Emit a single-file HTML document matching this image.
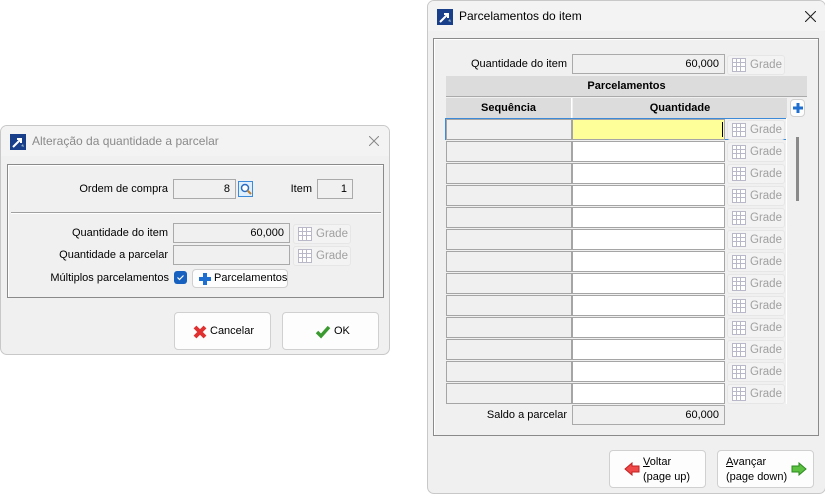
<!DOCTYPE html>
<html><head><meta charset="utf-8"><style>
*{box-sizing:border-box;margin:0;padding:0}
body{width:825px;height:494px;background:#fff;position:relative;overflow:hidden;font-family:"Liberation Sans",sans-serif;font-size:11px;color:#000}
.a{position:absolute}
.dlg{position:absolute;background:#f0f0f0;border:1px solid #c8c8c8;border-radius:7px;overflow:hidden}
.tb{position:absolute;left:0;right:0;top:0;height:30px;background:#f3f3f3}
.tt{position:absolute;left:31px;top:8px;font-size:12px}
.x{position:absolute;top:10px}
.grp{position:absolute;border:1px solid #8a8a8a;box-shadow:inset 1px 1px 0 #fff}
.inp{position:absolute;background:#f0f0f0;border:1px solid #aaa;text-align:right;padding-right:5px;line-height:18px}
.lbl{position:absolute;text-align:right;line-height:18px}
.gb{position:absolute;width:58px;height:20px;border:1px solid #e6e6e6;border-radius:3px;background:#f3f3f3;color:#a0a0a0;line-height:18px;padding-left:22px;font-size:11.5px}
.gb svg{position:absolute;left:4px;top:2px}
.btn{position:absolute;background:#fdfdfd;border:1px solid #d0d0d0;border-radius:4px}
.seq{position:absolute;left:446px;width:126px;height:21px;background:#f0f0f0;border:1px solid #a5a5a5}
.qt{position:absolute;left:572px;width:153px;height:21px;background:#fff;border:1px solid #a5a5a5}
</style></head><body>
<svg width="0" height="0" style="position:absolute"><defs>
<g id="grid"><rect x="0.5" y="0.5" width="13" height="13" fill="#fff" stroke="#b8b8c8"/><path d="M0.5 4.5H13.5M0.5 8.5H13.5M4.5 0.5V13.5M8.5 0.5V13.5" stroke="#b8b8c8"/></g>
<g id="logo"><rect width="16" height="16" fill="#1a3f8a"/><path d="M3 13L11 5M7 5H11V9" stroke="#fff" stroke-width="2" fill="none"/><path d="M11 12l2-2 1 3z" fill="#8ab"/></g>
</defs></svg>

<div class="dlg" style="left:0;top:125px;width:390px;height:230px">
<div class="tb"></div>
<svg class="a" style="left:9px;top:8px" width="16" height="16"><use href="#logo"/></svg>
<div class="tt" style="color:#8a8a8a">Alteração da quantidade a parcelar</div>
<svg class="x" style="left:368px" width="10" height="10"><path d="M0 0L10 10M10 0L0 10" stroke="#888" stroke-width="1"/></svg>
<div class="grp" style="left:6px;top:38px;width:377px;height:134px"></div>
<div class="lbl" style="left:40px;top:54px;width:127px">Ordem de compra</div>
<div class="inp" style="left:172px;top:53px;width:63px;height:20px">8</div>
<div class="a" style="left:237px;top:55px;width:15px;height:16px;border:1px solid #3c8ad8;background:#dfefff"><svg width="13" height="14"><circle cx="6" cy="6" r="3.5" fill="#fff" stroke="#2a6cc0" stroke-width="1.5"/><path d="M8.5 8.5L12 12" stroke="#c08030" stroke-width="2"/></svg></div>
<div class="lbl" style="left:285px;top:54px;width:26px">Item</div>
<div class="inp" style="left:316px;top:53px;width:36px;height:20px">1</div>
<div class="a" style="left:10px;top:86px;width:370px;height:1px;background:#a0a0a0;box-shadow:0 1px 0 #fff"></div>
<div class="lbl" style="left:20px;top:98px;width:147px">Quantidade do item</div>
<div class="inp" style="left:172px;top:97px;width:117px;height:20px">60,000</div>
<div class="gb" style="left:292px;top:98px"><svg width="14" height="14"><use href="#grid"/></svg>Grade</div>
<div class="lbl" style="left:20px;top:120px;width:147px">Quantidade a parcelar</div>
<div class="inp" style="left:172px;top:119px;width:117px;height:20px"></div>
<div class="gb" style="left:292px;top:120px"><svg width="14" height="14"><use href="#grid"/></svg>Grade</div>
<div class="lbl" style="left:20px;top:143px;width:148px">Múltiplos parcelamentos</div>
<div class="a" style="left:173px;top:145px;width:13px;height:13px;background:#1660c0;border-radius:3px"><svg width="13" height="13"><path d="M3.5 6.5l2 2 4-4" stroke="#fff" stroke-width="1.2" fill="none"/></svg></div>
<div class="btn" style="left:191px;top:143px;width:96px;height:19px;line-height:17px;padding-left:21px"><svg class="a" style="left:5px;top:2px" width="14" height="14"><path d="M7 1V13M1 7H13" stroke="#1e6fd0" stroke-width="4"/></svg>Parcelamentos</div>
<div class="btn" style="left:173px;top:186px;width:97px;height:38px;line-height:36px;padding-left:35px"><svg class="a" style="left:17px;top:11px" width="16" height="16"><path d="M3 3L13 13M13 3L3 13" stroke="#e03030" stroke-width="4"/></svg>Cancelar</div>
<div class="btn" style="left:281px;top:186px;width:97px;height:38px;line-height:36px;padding-left:51px"><svg class="a" style="left:32px;top:11px" width="16" height="16"><path d="M2 8l4 4 8-9" stroke="#3a9a30" stroke-width="3.5" fill="none"/></svg>OK</div>
</div>

<div class="dlg" style="left:427px;top:0;width:399px;height:494px">
<div class="tb"></div>
<svg class="a" style="left:9px;top:8px" width="16" height="16"><use href="#logo"/></svg>
<div class="tt">Parcelamentos do item</div>
<svg class="x" style="left:377px" width="11" height="11"><path d="M0 0L11 11M11 0L0 11" stroke="#222" stroke-width="1.1"/></svg>
</div>
<div class="grp" style="left:433px;top:38px;width:386px;height:398px"></div>
<div class="lbl" style="left:440px;top:55px;width:127px">Quantidade do item</div>
<div class="inp" style="left:572px;top:54px;width:153px;height:20px">60,000</div>
<div class="gb" style="left:727px;top:55px"><svg width="14" height="14"><use href="#grid"/></svg>Grade</div>
<div class="a" style="left:446px;top:76px;width:361px;height:21px;background:#dcdcdc;border-bottom:1px solid #aaa;text-align:center;font-weight:bold;line-height:21px">Parcelamentos</div>
<div class="a" style="left:446px;top:98px;width:126px;height:20px;background:#dcdcdc;text-align:center;font-weight:bold;line-height:20px;border-right:1px solid #fff">Sequência</div>
<div class="a" style="left:573px;top:98px;width:214px;height:20px;background:#dcdcdc;text-align:center;font-weight:bold;line-height:20px">Quantidade</div>
<div class="btn" style="left:790px;top:99px;width:15px;height:18px"><svg class="a" style="left:2px;top:3px" width="10" height="10"><path d="M5 0V10M0 5H10" stroke="#1e6fd0" stroke-width="3"/></svg></div>
<div class="a" style="left:796px;top:137px;width:3px;height:64px;background:#8a8a8a"></div>

<div class="a" style="left:445px;top:118px;width:342px;height:22px;border:1px solid #3c8ad8"></div>
<div class="seq" style="top:119px"></div><div class="qt" style="top:119px;background:#ffff99"><div class="a" style="left:149px;top:2px;width:1px;height:15px;background:#000"></div></div><div class="gb" style="left:727px;top:120px"><svg width="14" height="14"><use href="#grid"/></svg>Grade</div>
<div class="seq" style="top:141px"></div><div class="qt" style="top:141px"></div><div class="gb" style="left:727px;top:142px"><svg width="14" height="14"><use href="#grid"/></svg>Grade</div>
<div class="seq" style="top:163px"></div><div class="qt" style="top:163px"></div><div class="gb" style="left:727px;top:164px"><svg width="14" height="14"><use href="#grid"/></svg>Grade</div>
<div class="seq" style="top:185px"></div><div class="qt" style="top:185px"></div><div class="gb" style="left:727px;top:186px"><svg width="14" height="14"><use href="#grid"/></svg>Grade</div>
<div class="seq" style="top:207px"></div><div class="qt" style="top:207px"></div><div class="gb" style="left:727px;top:208px"><svg width="14" height="14"><use href="#grid"/></svg>Grade</div>
<div class="seq" style="top:229px"></div><div class="qt" style="top:229px"></div><div class="gb" style="left:727px;top:230px"><svg width="14" height="14"><use href="#grid"/></svg>Grade</div>
<div class="seq" style="top:251px"></div><div class="qt" style="top:251px"></div><div class="gb" style="left:727px;top:252px"><svg width="14" height="14"><use href="#grid"/></svg>Grade</div>
<div class="seq" style="top:273px"></div><div class="qt" style="top:273px"></div><div class="gb" style="left:727px;top:274px"><svg width="14" height="14"><use href="#grid"/></svg>Grade</div>
<div class="seq" style="top:295px"></div><div class="qt" style="top:295px"></div><div class="gb" style="left:727px;top:296px"><svg width="14" height="14"><use href="#grid"/></svg>Grade</div>
<div class="seq" style="top:317px"></div><div class="qt" style="top:317px"></div><div class="gb" style="left:727px;top:318px"><svg width="14" height="14"><use href="#grid"/></svg>Grade</div>
<div class="seq" style="top:339px"></div><div class="qt" style="top:339px"></div><div class="gb" style="left:727px;top:340px"><svg width="14" height="14"><use href="#grid"/></svg>Grade</div>
<div class="seq" style="top:361px"></div><div class="qt" style="top:361px"></div><div class="gb" style="left:727px;top:362px"><svg width="14" height="14"><use href="#grid"/></svg>Grade</div>
<div class="seq" style="top:383px"></div><div class="qt" style="top:383px"></div><div class="gb" style="left:727px;top:384px"><svg width="14" height="14"><use href="#grid"/></svg>Grade</div>
<div class="a" style="left:786px;top:118px;width:1px;height:286px;background:#fff"></div>

<div class="lbl" style="left:440px;top:406px;width:127px">Saldo a parcelar</div>
<div class="inp" style="left:572px;top:405px;width:153px;height:20px">60,000</div>

<div class="btn" style="left:609px;top:450px;width:97px;height:38px"><svg class="a" style="left:14px;top:11px" width="16" height="14"><path d="M1 7L8 1V4H15V10H8V13Z" fill="#f04848" stroke="#c02020"/></svg><div class="a" style="left:33px;top:4px;line-height:15px"><u>V</u>oltar<br>(page up)</div></div>
<div class="btn" style="left:717px;top:450px;width:97px;height:38px"><svg class="a" style="left:73px;top:11px" width="16" height="14"><path d="M15 7L8 1V4H1V10H8V13Z" fill="#5cc040" stroke="#2a8a20"/></svg><div class="a" style="left:8px;top:4px;line-height:15px"><u>A</u>vançar<br>(page down)</div></div>
</body></html>
